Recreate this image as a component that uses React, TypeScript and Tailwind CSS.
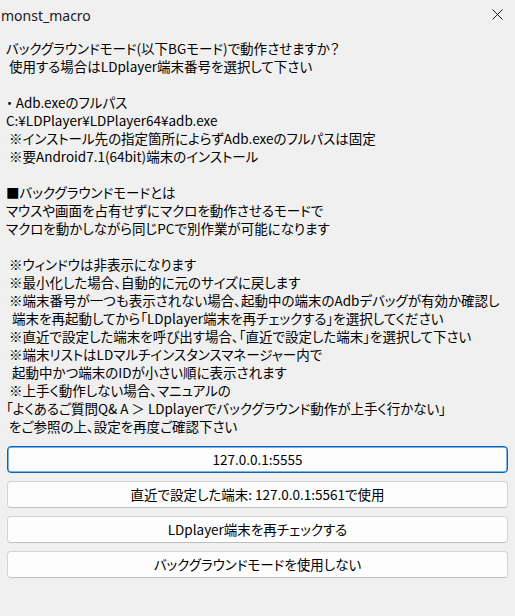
import React from "react";

const lines: string[] = [
  "バックグラウンドモード(以下BGモード)で動作させますか？",
  " 使用する場合はLDplayer端末番号を選択して下さい",
  "",
  "・ Adb.exeのフルパス",
  "C:¥LDPlayer¥LDPlayer64¥adb.exe",
  " ※インストール先の指定箇所によらずAdb.exeのフルパスは固定",
  " ※要Android7.1(64bit)端末のインストール",
  "",
  "■バックグラウンドモードとは",
  "マウスや画面を占有せずにマクロを動作させるモードで",
  "マクロを動かしながら同じPCで別作業が可能になります",
  "",
  " ※ウィンドウは非表示になります",
  " ※最小化した場合、自動的に元のサイズに戻します",
  " ※端末番号が一つも表示されない場合、起動中の端末のAdbデバッグが有効か確認し",
  "  端末を再起動してから「LDplayer端末を再チェックする」を選択してください",
  " ※直近で設定した端末を呼び出す場合、「直近で設定した端末」を選択して下さい",
  " ※端末リストはLDマルチインスタンスマネージャー内で",
  "  起動中かつ端末のIDが小さい順に表示されます",
  " ※上手く動作しない場合、マニュアルの",
  "「よくあるご質問Q& A ＞ LDplayerでバックグラウンド動作が上手く行かない」",
  " をご参照の上、設定を再度ご確認下さい",
];

const buttons = [
  "127.0.0.1:5555",
  "直近で設定した端末: 127.0.0.1:5561で使用",
  "LDplayer端末を再チェックする",
  "バックグラウンドモードを使用しない",
];

export default function App() {
  return (
    <div className="w-[515px] h-[616px] bg-[#f0f0f0] text-black overflow-hidden font-['Noto_Sans_CJK_JP','Noto_Sans',sans-serif]">
      {/* Title bar */}
      <div className="h-[30px] flex items-center justify-between pl-[1px] pr-[12px]">
        <span className="text-[14px] font-['Noto_Sans',sans-serif] text-[#1a1a1a]">monst_macro</span>
        <svg width="11" height="11" viewBox="0 0 11 11" className="mb-[2px]">
          <path d="M0.5 0.5 L10.5 10.5 M10.5 0.5 L0.5 10.5" stroke="#1a1a1a" strokeWidth="1" />
        </svg>
      </div>

      {/* Message */}
      <div className="pt-[9px] pl-[6px] text-[13.5px] [font-feature-settings:'palt'] whitespace-pre">
        {lines.map((l, i) => (
          <div key={i} className="h-[18px] leading-[18px] overflow-hidden">
            {l}
          </div>
        ))}
      </div>

      {/* Buttons */}
      <div className="mt-[11px] px-[7px] flex flex-col gap-[8px]">
        {buttons.map((b, i) => (
          <button
            key={i}
            className={
              "h-[27px] w-full rounded-[4px] bg-[#fdfdfd] text-[13.5px] [font-feature-settings:'palt'] flex items-center justify-center " +
              (i === 0
                ? "border border-[#0067c0] shadow-[inset_0_0_0_0.5px_#0067c0]"
                : "border border-[#d3d3d3] border-b-[#c0c0c0]")
            }
          >
            {b}
          </button>
        ))}
      </div>
    </div>
  );
}
